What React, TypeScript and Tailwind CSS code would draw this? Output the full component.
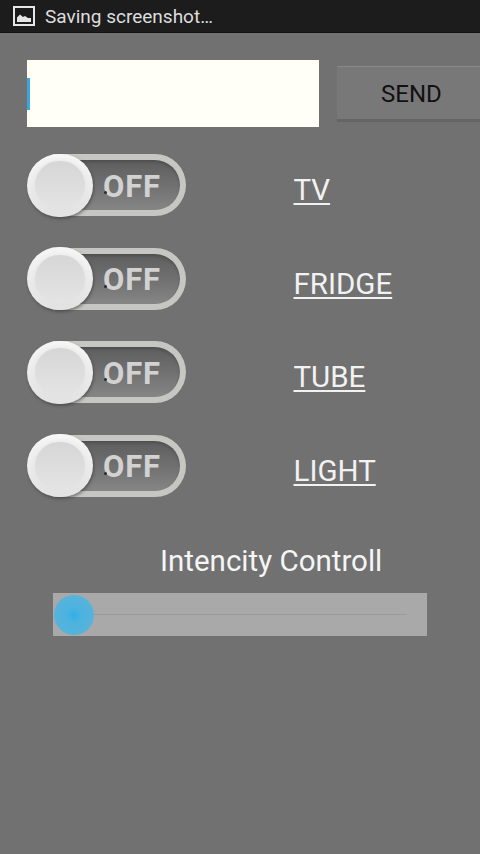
const rows = ["TV", "FRIDGE", "TUBE", "LIGHT"];

function Toggle() {
  return (
    <div className="flex items-center w-[159px] h-[64px]">
      <div className="relative z-10 shrink-0 w-[66px] h-[63px] rounded-full bg-gradient-to-b from-[#f6f6f6] to-[#e2e2e2] shadow-[1px_2px_3px_rgba(50,50,50,0.5)] flex items-center justify-center">
        <div className="w-[50px] h-[48px] rounded-full bg-gradient-to-b from-[#d6d6d6] to-[#e4e4e4] shadow-[0_0_4px_rgba(225,225,225,0.9)]" />
      </div>
      <div className="relative -ml-[40px] flex-1 h-[62px] rounded-r-[31px] border-[6px] border-l-0 border-[#c6c6c2] bg-gradient-to-b from-[#5e5e5e] via-[#707070] to-[#868686] flex items-center pl-[50px] pt-[2px] shadow-[inset_0_2px_3px_rgba(30,30,30,0.25)]">
        <span className="text-[31px] leading-none font-bold text-[#d2d2d2] tracking-[0.8px] font-['Roboto',sans-serif]">OFF</span>
        <span className="absolute left-[51px] top-[31px] w-[3px] h-[3px] rounded-full bg-[#2a2a2a]" />
      </div>
    </div>
  );
}

export default function App() {
  return (
    <div className="w-[480px] h-[854px] overflow-hidden bg-[#717171] flex flex-col font-['Roboto',sans-serif]">
      <div className="h-[33px] bg-[#1c1c1c] border-b border-[#111] flex items-center pl-[13px] gap-[10px] shrink-0">
        <svg width="22" height="20" viewBox="0 0 22 20" fill="none">
          <rect x="1" y="1" width="20" height="18" stroke="#e6e6e6" strokeWidth="2" />
          <path d="M4 16V11.5L7 8.5L10 11L12 10L15 12H18V16Z" fill="#e6e6e6" />
        </svg>
        <span className="text-[19px] leading-none text-[#dddddd]">Saving screenshot…</span>
      </div>

      <div className="flex items-center pl-[27px] mt-[27px] h-[67px] shrink-0">
        <div className="w-[292px] h-[67px] bg-[#fffff8] flex items-center shrink-0">
          <div className="w-[3px] h-[32px] bg-[#3aa7dc]" />
        </div>
        <div className="ml-[18px] flex-1 h-[56px] bg-[#787878] border-t border-[#888888] border-b-[3px] border-b-[#656565] flex items-center justify-center pl-[6px] pt-[2px]">
          <span className="text-[24px] leading-none text-[#111111] font-['Roboto',sans-serif]">SEND</span>
        </div>
      </div>

      <div className="flex flex-col gap-[29.5px] mt-[26px] pl-[27px]">
        {rows.map((r) => (
          <div key={r} className="flex items-start h-[64px]">
            <Toggle />
            <span className="ml-[107.5px] mt-[18px] text-[29.5px] leading-[38px] text-[#f2f2f2] underline underline-offset-[3px] decoration-[2px]">{r}</span>
          </div>
        ))}
      </div>

      <div className="mt-[44px] pl-[160px] text-[29.5px] leading-[38px] text-[#f5f5f5] whitespace-nowrap">Intencity Controll</div>

      <div className="relative ml-[53px] mt-[13px] w-[374px] h-[43px] bg-[#a9a9a9] flex items-center pl-[20px] pr-[20px]">
        <div className="w-full h-[1px] bg-[#9b9b9b]" />
        <div className="absolute left-[1px] top-[2px] w-[40px] h-[40px] rounded-full bg-[radial-gradient(circle,#2fb0e8_0%,#4cb2df_25%,#59b4da_80%,#86b5ca_100%)]" />
      </div>
    </div>
  );
}
